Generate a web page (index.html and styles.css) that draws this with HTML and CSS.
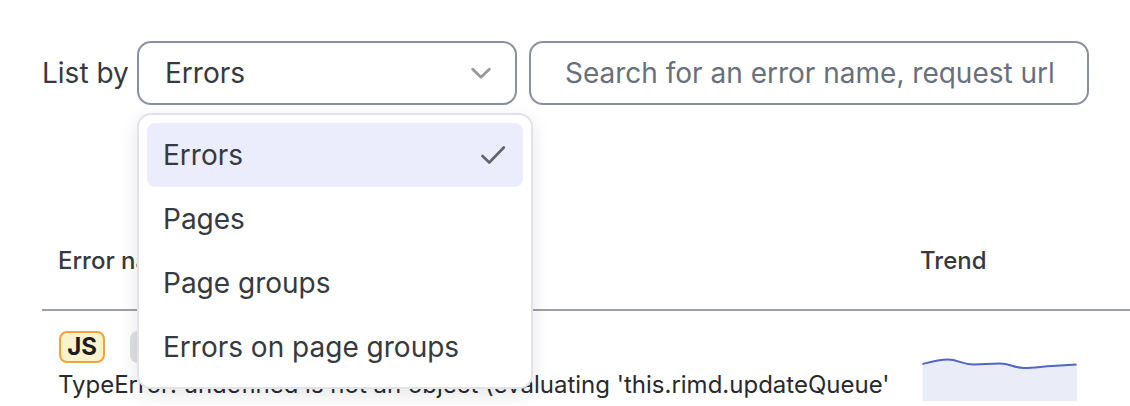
FILE: index.html
```html
<!DOCTYPE html>
<html lang="en">
<head>
<meta charset="utf-8">
<title>Errors</title>
<link rel="stylesheet" href="styles.css">
</head>
<body>
<main class="page">
  <form class="toolbar">
    <label class="toolbar-label" for="list-by">List by</label>
    <div class="picker">
      <select class="field picker-select" id="list-by">
        <option>Errors</option>
        <option>Pages</option>
        <option>Page groups</option>
        <option>Errors on page groups</option>
      </select>
      <svg class="picker-arrow" viewBox="0 0 20 12" aria-hidden="true"><path d="M1.7 2.2 L10 10.2 L18.3 2.2"/></svg>
      <div class="menu" role="listbox" aria-label="List by">
        <button type="button" class="menu-item menu-item-selected" role="option" aria-selected="true">Errors
          <svg class="menu-check" viewBox="0 0 26 20" aria-hidden="true"><path d="M1.5 11 L8.300 17.500 L22.800 2.500"/></svg>
        </button>
        <button type="button" class="menu-item" role="option" aria-selected="false">Pages</button>
        <button type="button" class="menu-item" role="option" aria-selected="false">Page groups</button>
        <button type="button" class="menu-item" role="option" aria-selected="false">Errors on page groups</button>
      </div>
    </div>
    <input class="field search" type="text" aria-label="Search errors" placeholder="Search for an error name, request url">
  </form>
  <table class="errors">
    <thead>
      <tr><th class="name-col">Error name</th><th class="trend-col">Trend</th></tr>
    </thead>
    <tbody>
      <tr>
        <td>
          <div class="tags"><span class="tag tag-js">JS</span><span class="tag tag-plain"></span></div>
          <div class="message">TypeError: undefined is not an object (evaluating 'this.rimd.updateQueue'</div>
        </td>
        <td class="trend-cell">
          <svg class="trend" viewBox="0 0 158 46" role="img" aria-label="Trend">
            <path class="trend-area" d="M2.500 9 C10 7 18 4.500 28 4.500 C38 4.500 42 9.500 54 9.500 C64 9.500 68 8.500 80 8.500 C90 8.500 94 13 104 13 C114 13 122 11.500 132 11 L157 9.500 V46 H2.500 Z"/>
            <path class="trend-line" d="M2.500 9 C10 7 18 4.500 28 4.500 C38 4.500 42 9.500 54 9.500 C64 9.500 68 8.500 80 8.500 C90 8.500 94 13 104 13 C114 13 122 11.500 132 11 L156.500 9.500"/>
          </svg>
        </td>
      </tr>
    </tbody>
  </table>
</main>
</body>
</html>
```
FILE: styles.css
```css
* { box-sizing: border-box; }

body {
  margin: 0;
  background: #fff;
  color: #36393d;
  font-family: Inter, "Liberation Sans", sans-serif;
  font-size: 28px;
}

.page { padding: 41px 0 0 42px; }

.toolbar {
  display: flex;
  align-items: center;
  padding-right: 41px;
}

.toolbar-label { width: 95px; white-space: nowrap; }

.picker {
  position: relative;
  width: 380px;
  margin-right: 12px;
}

.field {
  height: 64px;
  border: 2px solid #8b909d;
  border-radius: 14px;
  background: #fff;
  color: inherit;
  font: inherit;
}

.picker-select {
  display: block;
  width: 100%;
  padding: 0 26px;
  appearance: none;
}

.picker-arrow {
  position: absolute;
  top: 26px;
  right: 26px;
  width: 20px;
  height: 12px;
  fill: none;
  stroke: #999;
  stroke-width: 2.8;
  stroke-linecap: round;
  stroke-linejoin: round;
}

.search { flex: 1; min-width: 0; padding: 0 32px 0 34px; }
.search::placeholder { color: #68707b; opacity: 1; }

.menu {
  position: absolute;
  top: 72px;
  left: 0;
  z-index: 1;
  width: 396px;
  padding: 8px;
  border: 2px solid #e2e2e9;
  border-radius: 14px;
  background: #fff;
  box-shadow: 0 6px 20px rgba(0, 0, 0, 0.1);
}

.menu-item {
  display: flex;
  align-items: center;
  justify-content: space-between;
  width: 100%;
  height: 64px;
  padding: 0 16px;
  border: 0;
  border-radius: 8px;
  background: none;
  color: inherit;
  font: inherit;
  text-align: left;
}

.menu-item-selected { background: #ebedfc; }

.menu-check {
  width: 26px;
  height: 20px;
  fill: none;
  stroke: #62656e;
  stroke-width: 2.6;
  stroke-linecap: round;
  stroke-linejoin: round;
}

.errors {
  width: 100%;
  margin-top: 106px;
  border-collapse: separate;
  border-spacing: 0;
  table-layout: fixed;
}

.errors th {
  height: 100px;
  padding: 0 16px;
  border-bottom: 2px solid #9ca0ab;
  font-size: 24px;
  font-weight: 500;
  text-align: left;
}

.trend-col { width: 226px; }

.errors td { padding: 20px 16px 4px; vertical-align: bottom; }

.tags { display: flex; gap: 25px; margin-bottom: 6px; }

.tag {
  width: 46px;
  height: 32px;
  border-radius: 8px;
  font-size: 24px;
  font-weight: 700;
  line-height: 28px;
  text-align: center;
}

.tag-js { margin-left: 1px; border: 2px solid #f0a23c; background: #f9f3cc; color: #1b1d20; }
.tag-plain { background: #dfe0e5; }

.message {
  color: #282a2d;
  font-size: 24px;
  line-height: 32px;
  white-space: nowrap;
}

.trend { display: block; width: 158px; height: 46px; }
.trend-area { fill: #eaedf8; }
.trend-line { fill: none; stroke: #5266c6; stroke-width: 2; }
```
